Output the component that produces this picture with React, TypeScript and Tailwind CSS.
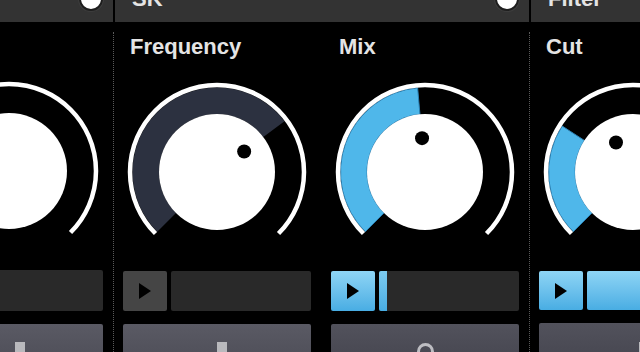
import React from "react";

const pt = (cx: number, cy: number, r: number, deg: number) => {
  const a = (deg * Math.PI) / 180;
  return [cx + r * Math.sin(a), cy - r * Math.cos(a)];
};

const arc = (cx: number, cy: number, r: number, a0: number, a1: number) => {
  const [x0, y0] = pt(cx, cy, r, a0);
  const [x1, y1] = pt(cx, cy, r, a1);
  const large = a1 - a0 > 180 ? 1 : 0;
  return `M ${x0} ${y0} A ${r} ${r} 0 ${large} 1 ${x1} ${y1}`;
};

const sector = (cx: number, cy: number, R: number, r: number, a0: number, a1: number) => {
  const [x0, y0] = pt(cx, cy, R, a0);
  const [x1, y1] = pt(cx, cy, R, a1);
  const [x2, y2] = pt(cx, cy, r, a1);
  const [x3, y3] = pt(cx, cy, r, a0);
  const large = a1 - a0 > 180 ? 1 : 0;
  return `M ${x0} ${y0} A ${R} ${R} 0 ${large} 1 ${x1} ${y1} L ${x2} ${y2} A ${r} ${r} 0 ${large} 0 ${x3} ${y3} Z`;
};

type KnobProps = { cx: number; value: number; dot: number; color: string; stroke: string };

function Knob({ cx, value, dot, color, stroke }: KnobProps) {
  const cy = 100;
  const [dx, dy] = pt(cx, cy, 34, dot);
  return (
    <svg width={208} height={190} className="block shrink-0" viewBox="0 0 208 190">
      <path d={sector(cx, cy, 84.5, 58, -135, value)} fill={color} stroke={stroke} strokeWidth={1} />
      <path d={arc(cx, cy, 87, -135, 135)} fill="none" stroke="#ffffff" strokeWidth={4.5} />
      <circle cx={cx} cy={cy} r={58} fill="#ffffff" />
      <circle cx={dx} cy={dy} r={7} fill="#000000" />
    </svg>
  );
}

function Play({ active }: { active: boolean }) {
  return (
    <div
      className={
        active
          ? "w-[44px] h-full shrink-0 rounded-[2px] flex items-center justify-center bg-gradient-to-b from-[#8ed5f5] to-[#48ade3]"
          : "w-[44px] h-full shrink-0 rounded-[2px] flex items-center justify-center bg-[#454545]"
      }
    >
      <svg width="12" height="16" viewBox="0 0 12 16" className="block">
        <polygon points="0,0 12,8 0,16" fill="#000" />
      </svg>
    </div>
  );
}

type ColProps = {
  label: string;
  border: boolean;
  knob: Omit<KnobProps, "cx">;
  playActive: boolean;
  bar: "none" | "small" | "full";
  bottom: "thumb" | "ring";
  thumbOffset: number;
  dark?: boolean;
};

function Column({ label, border, knob, playActive, bar, bottom, thumbOffset, dark }: ColProps) {
  return (
    <div
      className={
        border
          ? "w-[208px] shrink-0 h-[330px] flex flex-col border-l border-dotted border-[#5a5a5a]"
          : "w-[208px] shrink-0 h-[330px] flex flex-col"
      }
    >
      <div
        className={
          border
            ? "mt-[4px] h-[22px] leading-[22px] text-[22px] font-bold text-[#e4e4e4] pl-[16px] whitespace-nowrap"
            : "mt-[4px] h-[22px] leading-[22px] text-[22px] font-bold text-[#e4e4e4] pl-[18px] whitespace-nowrap"
        }
      >
        {label}
      </div>
      <div className="mt-[14px]">
        <Knob cx={border ? 103 : 104} {...knob} />
      </div>
      <div className={border ? "mt-[9px] h-[43px] flex gap-[4px] pl-[9px] pr-[10px]" : "mt-[9px] h-[43px] flex gap-[4px] pl-[10px] pr-[10px]"}>
        <Play active={playActive} />
        {bar === "full" ? (
          <div className="flex-1 rounded-[2px] bg-gradient-to-b from-[#8ed5f5] to-[#48ade3]" />
        ) : (
          <div className="flex-1 rounded-[2px] bg-[#292929] flex overflow-hidden">
            {bar === "small" ? <div className="w-[8px] h-full bg-gradient-to-b from-[#7ccbf0] to-[#48ade3]" /> : null}
          </div>
        )}
      </div>
      <div className={border ? "mt-[13px] h-[40px] pl-[9px] pr-[10px]" : "mt-[13px] h-[40px] pl-[10px] pr-[10px]"}>
        <div
          className={
            dark
              ? "h-full rounded-t-[2px] bg-gradient-to-b from-[#52525c] to-[#464650] pt-[19px]"
              : "h-full rounded-t-[2px] bg-gradient-to-b from-[#5a5a64] to-[#4e4e58] pt-[18px]"
          }
        >
          {bottom === "thumb" ? (
            <div className="w-[10px] h-[20px] bg-[#b9b9bd]" style={{ marginLeft: thumbOffset }} />
          ) : (
            <div className="flex justify-center">
              <div className="w-[17px] h-[17px] rounded-full border-[3px] border-[#bdbdc2]" />
            </div>
          )}
        </div>
      </div>
    </div>
  );
}

function Toggle() {
  return <div className="-mt-[13px] w-[24px] h-[24px] shrink-0 rounded-full bg-white border-2 border-[#1e1e1e] shadow-[0_0_0_1px_#3d3d3d]" />;
}

export default function App() {
  const darkBand = "#2c3140";
  const blue = "#4fb7ea";
  return (
    <div className="w-[640px] h-[352px] bg-black overflow-hidden font-['Liberation_Sans',Arial,sans-serif]">
      <div className="flex h-[22px] -ml-[95px] gap-[2px]">
        <div className="w-[208px] shrink-0 bg-[#333333] flex justify-end items-start pr-[10px]">
          <Toggle />
        </div>
        <div className="w-[414px] shrink-0 bg-[#333333] flex justify-between items-start pl-[17px] pr-[10px]">
          <span className="-mt-[12px] leading-[22px] text-[22px] font-bold text-[#e4e4e4]">SK</span>
          <Toggle />
        </div>
        <div className="w-[300px] shrink-0 bg-[#333333] flex items-start pl-[17px]">
          <span className="-mt-[12px] leading-[22px] text-[22px] font-bold text-[#e4e4e4]">Filter</span>
        </div>
      </div>
      <div className="flex -ml-[95px] mt-[10px]">
        <Column
          label=""
          border={false}
          knob={{ value: -100, dot: -100, color: darkBand, stroke: "none" }}
          playActive={false}
          bar="none"
          bottom="thumb"
          thumbOffset={100}
        />
        <Column
          label="Frequency"
          border={true}
          knob={{ value: 53, dot: 53, color: darkBand, stroke: "none" }}
          playActive={false}
          bar="none"
          bottom="thumb"
          thumbOffset={94}
        />
        <Column
          label="Mix"
          border={false}
          knob={{ value: -5, dot: -5, color: blue, stroke: "#2b7fb2" }}
          playActive={true}
          bar="small"
          bottom="ring"
          thumbOffset={0}
          dark={true}
        />
        <Column
          label="Cut"
          border={true}
          knob={{ value: -57, dot: -30, color: blue, stroke: "#2b7fb2" }}
          playActive={true}
          bar="full"
          bottom="thumb"
          thumbOffset={100}
          dark={true}
        />
      </div>
    </div>
  );
}
